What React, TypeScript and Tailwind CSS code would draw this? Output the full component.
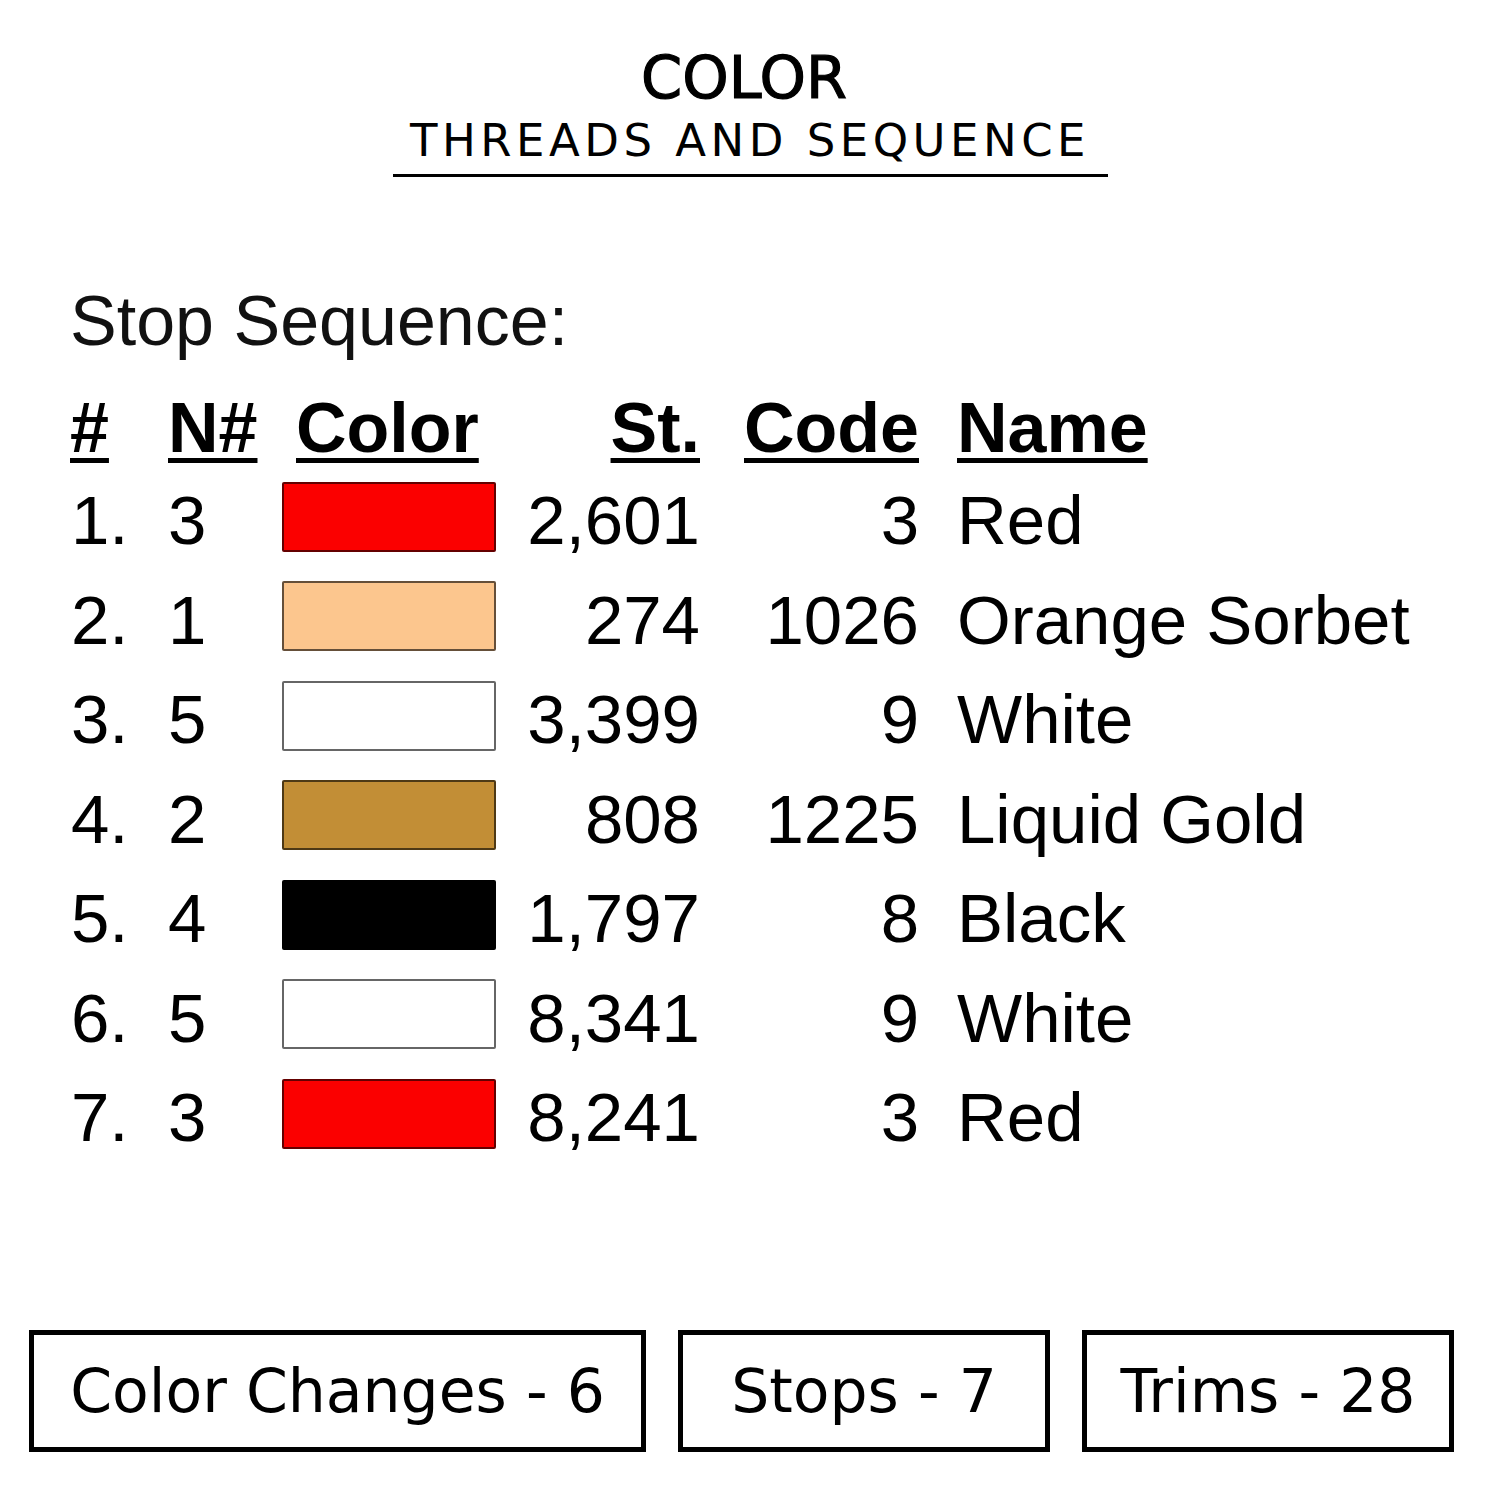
const rows = [
  { n: "1.", needle: "3", color: "bg-[#fb0000]", st: "2,601", code: "3", name: "Red" },
  { n: "2.", needle: "1", color: "bg-[#fcc68e]", st: "274", code: "1026", name: "Orange Sorbet" },
  { n: "3.", needle: "5", color: "bg-white", st: "3,399", code: "9", name: "White" },
  { n: "4.", needle: "2", color: "bg-[#c28e36]", st: "808", code: "1225", name: "Liquid Gold" },
  { n: "5.", needle: "4", color: "bg-black", st: "1,797", code: "8", name: "Black" },
  { n: "6.", needle: "5", color: "bg-white", st: "8,341", code: "9", name: "White" },
  { n: "7.", needle: "3", color: "bg-[#fb0000]", st: "8,241", code: "3", name: "Red" },
];

const grid = "grid grid-cols-[98px_114px_214px_204px_219px_1fr]";
const head = "underline decoration-[5px] underline-offset-[6px]";

const StatBox = ({ label, width }: { label: string; width: string }) => (
  <div
    className={`${width} h-[122px] border-[5px] border-black flex items-center justify-center text-[60px] leading-none text-black`}
  >
    {label}
  </div>
);

export default function App() {
  return (
    <div className="w-[1500px] h-[1500px] bg-white flex flex-col text-black">
      {/* heading */}
      <div className="flex flex-col items-center pt-[48px] font-['DejaVu_Sans',sans-serif]">
        <div className="text-[59px] leading-none pr-[12px] [-webkit-text-stroke:1.2px_black]">COLOR</div>
        <div className="mt-[11px] text-[45px] leading-none tracking-[4.5px]">
          THREADS AND SEQUENCE
        </div>
        <div className="mt-[11px] w-[715px] h-[3px] bg-black" />
      </div>

      {/* stop sequence table */}
      <div className="pl-[70px] font-['Liberation_Sans',Arial,sans-serif]">
        <div className="mt-[109px] text-[70px] leading-none text-[#111]">Stop Sequence:</div>
        <div className={`${grid} mt-[37px] h-[70px] items-center text-[70px] leading-none font-bold`}>
          <span><span className={head}>#</span></span>
          <span><span className={head}>N#</span></span>
          <span className="pl-[14px]"><span className={head}>Color</span></span>
          <span className="text-right"><span className={head}>St.</span></span>
          <span className="text-right"><span className={head}>Code</span></span>
          <span className="pl-[38px]"><span className={head}>Name</span></span>
        </div>
        <div className="mt-[8px] flex flex-col">
          {rows.map((r, i) => (
            <div key={i} className={`${grid} h-[99.5px] items-center text-[69px] leading-none`}>
              <span className="pl-[1px]">{r.n}</span>
              <span>{r.needle}</span>
              <div className={`${r.color} w-[214px] h-[70px] mb-[8px] border-2 border-black/60 rounded-[2px]`} />
              <span className="text-right">{r.st}</span>
              <span className="text-right">{r.code}</span>
              <span className="pl-[38px] whitespace-nowrap">{r.name}</span>
            </div>
          ))}
        </div>
      </div>

      {/* summary */}
      <div className="mt-[162px] pl-[29px] flex gap-[32px] font-['DejaVu_Sans',sans-serif]">
        <StatBox label="Color Changes - 6" width="w-[617px]" />
        <StatBox label="Stops - 7" width="w-[372px]" />
        <StatBox label="Trims - 28" width="w-[372px]" />
      </div>
    </div>
  );
}
